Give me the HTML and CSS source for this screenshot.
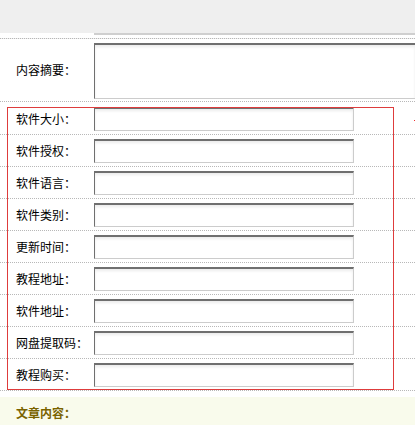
FILE: index.html
```html
<!DOCTYPE html>
<html lang="zh-CN">
<head>
    <meta charset="UTF-8">
    <title>发布软件</title>
    <link rel="stylesheet" href="styles.css">
</head>
<body>
    <div class="form">
        <div class="row row-prev">
            <div class="prev-edge"></div>
        </div>

        <div class="row row-summary">
            <label class="lbl">内容摘要：</label>
            <textarea class="area"></textarea>
        </div>

        <!-- soft info block, outlined in red -->
        <div class="group">
            <div class="row">
                <label class="lbl">软件大小：</label>
                <input type="text" class="txt">
                <i class="req"></i>
            </div>
            <div class="row">
                <label class="lbl">软件授权：</label>
                <input type="text" class="txt">
            </div>
            <div class="row">
                <label class="lbl">软件语言：</label>
                <input type="text" class="txt">
            </div>
            <div class="row">
                <label class="lbl">软件类别：</label>
                <input type="text" class="txt">
            </div>
            <div class="row">
                <label class="lbl">更新时间：</label>
                <input type="text" class="txt">
            </div>
            <div class="row">
                <label class="lbl">教程地址：</label>
                <input type="text" class="txt">
            </div>
            <div class="row">
                <label class="lbl">软件地址：</label>
                <input type="text" class="txt">
            </div>
            <div class="row">
                <label class="lbl">网盘提取码：</label>
                <input type="text" class="txt">
            </div>
            <div class="row">
                <label class="lbl">教程购买：</label>
                <input type="text" class="txt">
            </div>
            <div class="outline"></div>
        </div>

        <div class="content-head">文章内容：</div>
    </div>
</body>
</html>
```

FILE: styles.css
```css
:root {
    --dot-line: #b8b8b8;
    --input-dark: #6f6f6f;
    --input-light: #cccccc;
    --mark-red: #de3c3c;
}

* {
    box-sizing: border-box;
    margin: 0;
    padding: 0;
}

html, body {
    background: #fff;
    overflow: hidden;
}

body {
    font-family: "Noto Sans CJK SC", "Liberation Sans", sans-serif;
    font-size: 12px;
    color: #000;
}

.form {
    width: 100%;
}

.row {
    display: flex;
    align-items: center;
    height: 32px;
    border-bottom: 1px dotted var(--dot-line);
}

.lbl {
    width: 94px;
    padding-left: 16px;
    line-height: 16px;
    white-space: nowrap;
    flex-shrink: 0;
}

/* tail of the field above, scrolled mostly out of view */
.row-prev {
    height: 39px;
    align-items: flex-start;
    background: linear-gradient(#efefef 0, #efefef 33px, #fff 33px);
    padding-left: 94px;
}

.prev-edge {
    width: 100%;
    height: 35px;
    border-bottom: 2px solid #cfcfcf;
}

.row-summary {
    height: 63px;
    align-items: flex-start;
    padding-top: 4px;
}

.row-summary .lbl {
    margin-top: 19px;
}

/* runs on past the right edge in the original, so no right border */
.area {
    flex: 1;
    height: 56px;
    border: 1px solid;
    border-right: none;
    border-color: var(--input-dark) var(--input-light) var(--input-light) var(--input-dark);
    border-top-width: 2px;
    resize: none;
    box-shadow: inset 0 2px 3px #ececec;
}

.group {
    position: relative;
    padding-top: 1px;
}

.txt {
    width: 260px;
    height: 24px;
    margin-top: 1px;
    border: 1px solid;
    border-color: var(--input-dark) var(--input-light) var(--input-light) var(--input-dark);
    border-top-width: 2px;
    background: #fff;
    box-shadow: inset 0 2px 3px #ececec;
}

.req {
    width: 1px;
    height: 1px;
    margin-left: 60px;
    align-self: flex-start;
    margin-top: 17px;
    background: #f03030;
}

.outline {
    position: absolute;
    left: 7px;
    top: 5px;
    width: 387px;
    height: 283px;
    border: 1px solid var(--mark-red);
    pointer-events: none;
}

.content-head {
    margin-top: 6px;
    padding: 8px 16px 10px;
    line-height: 16px;
    background: #f9fbec;
    color: #7a6300;
    font-weight: bold;
}
```
